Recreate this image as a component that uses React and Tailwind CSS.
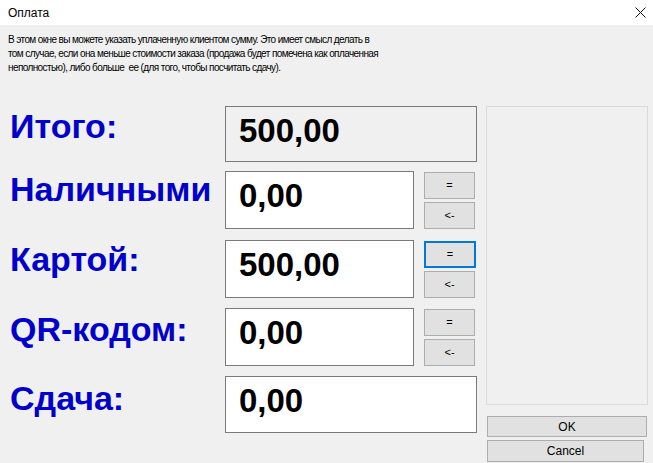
import React from 'react'

const label = 'font-["Liberation_Sans",Arial,sans-serif] font-bold text-[34px] leading-[34px] text-[#0000cc] whitespace-nowrap'
const value = 'font-["Liberation_Sans",Arial,sans-serif] font-bold text-[33px] leading-[33px] text-black pl-[13px] pt-[7px]'
const btnBase = 'h-[27px] bg-[#e1e1e1] flex items-center justify-center text-[11px] text-black font-["Liberation_Sans",Arial,sans-serif]'

function Field({ text, wide, readOnly, h = 58 }) {
  return (
    <div
      className={`${wide ? 'w-[252px]' : 'w-[189px]'} ${readOnly ? 'bg-[#f0f0f0]' : 'bg-white'} ${h === 56 ? 'h-[56px]' : h === 57 ? 'h-[57px]' : 'h-[58px]'} border border-[#7a7a7a] ${value}`}
    >
      {text}
    </div>
  )
}

function Buttons({ focused }) {
  return (
    <div className="ml-[10px] flex flex-col gap-[3px] pt-px">
      <div className={focused ? `${btnBase} w-[52px] border-2 border-[#0078d7]` : `${btnBase} w-[51px] border border-[#adadad]`}>=</div>
      <div className={`${btnBase} w-[51px] border border-[#adadad]`}>&lt;-</div>
    </div>
  )
}

export default function App() {
  return (
    <div className="w-[653px] h-[463px] bg-[#f0f0f0] overflow-hidden font-['Liberation_Sans',Arial,sans-serif]">
      <div className="h-[25px] bg-white flex items-center justify-between pl-[8px] pr-[6px]">
        <span className="text-[12px] text-black">Оплата</span>
        <svg width="11" height="11" viewBox="0 0 11 11" className="mr-[1px]">
          <path d="M0.5 0.5 L10.5 10.5 M10.5 0.5 L0.5 10.5" stroke="#111" strokeWidth="1" />
        </svg>
      </div>

      <div className="pl-[8px] pt-[8px] text-[10px] leading-[14px] text-black tracking-[-0.6px]">
        <div>В этом окне вы можете указать уплаченную клиентом сумму. Это имеет смысл делать в</div>
        <div>том случае, если она меньше стоимости заказа (продажа будет помечена как оплаченная</div>
        <div>неполностью), либо больше&nbsp; ее (для того, чтобы посчитать сдачу).</div>
      </div>

      <div className="flex mt-[31px]">
        <div className="flex flex-col">
          <div className="flex">
            <div className={`w-[225px] pl-[10px] pt-[3px] ${label}`}>Итого:</div>
            <Field text="500,00" wide readOnly h={56} />
          </div>
          <div className="flex mt-[9px]">
            <div className={`w-[225px] pl-[10px] pt-[1px] ${label}`}>Наличными</div>
            <Field text="0,00" />
            <Buttons />
          </div>
          <div className="flex mt-[11px]">
            <div className={`w-[225px] pl-[10px] pt-[2px] ${label}`}>Картой:</div>
            <Field text="500,00" />
            <Buttons focused />
          </div>
          <div className="flex mt-[10px]">
            <div className={`w-[225px] pl-[10px] pt-[4px] ${label}`}>QR-кодом:</div>
            <Field text="0,00" />
            <Buttons />
          </div>
          <div className="flex mt-[10px]">
            <div className={`w-[225px] pl-[10px] pt-[5px] ${label}`}>Сдача:</div>
            <Field text="0,00" wide h={57} />
          </div>
        </div>

        <div className="ml-[9px] flex flex-col">
          <div className="w-[162px] h-[299px] border border-[#dadada] bg-[#f0f0f0]" />
          <div className="mt-[11px] ml-px w-[160px] h-[21px] bg-[#e1e1e1] border border-[#adadad] flex items-center justify-center text-[12px] text-black">
            OK
          </div>
          <div className="mt-[3px] ml-px w-[157px] h-[22px] bg-[#e1e1e1] border border-[#adadad] flex items-center justify-center text-[12px] text-black">
            Cancel
          </div>
        </div>
      </div>
    </div>
  )
}
